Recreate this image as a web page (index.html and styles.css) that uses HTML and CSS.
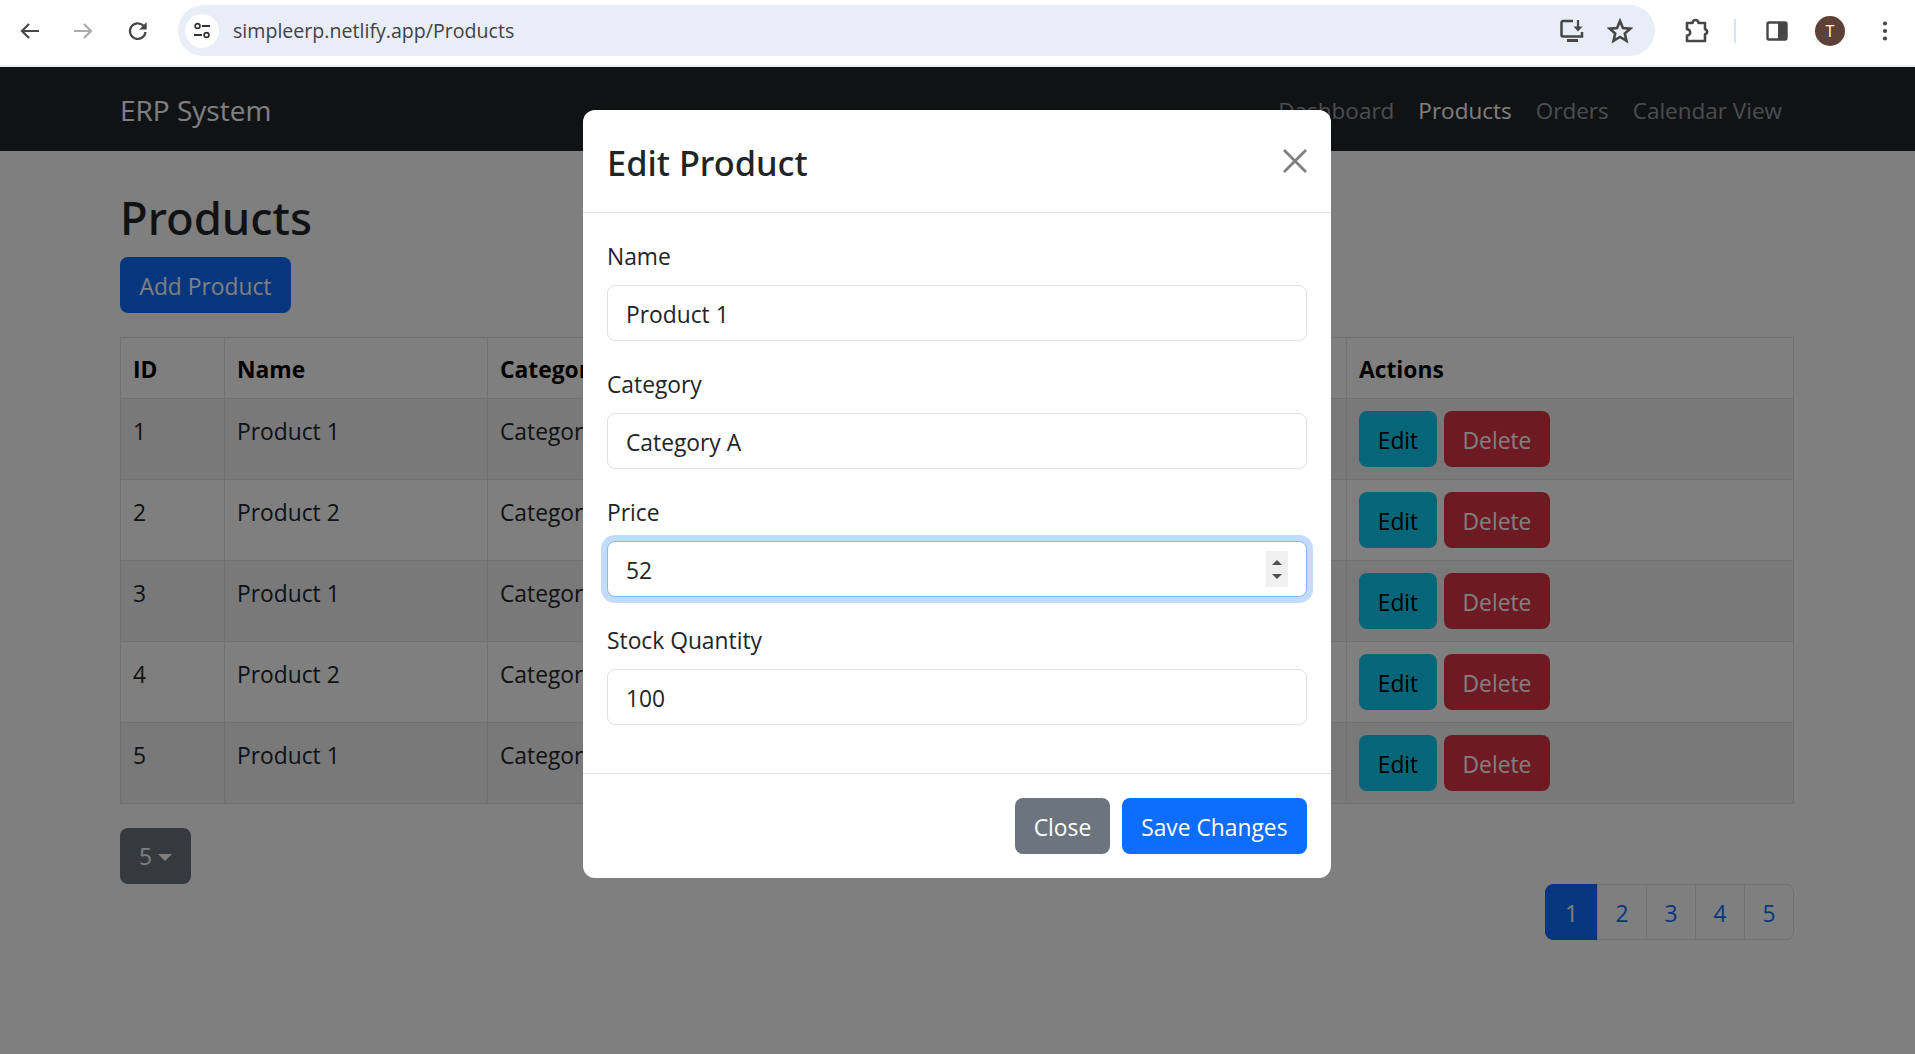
FILE: index.html
```html
<!DOCTYPE html>
<html lang="en">
<head>
    <meta charset="UTF-8">
    <meta name="viewport" content="width=device-width, initial-scale=1.0">
    <title>ERP System</title>
    <link rel="stylesheet" href="styles.css">
</head>
<body>

    <div class="browser-bar">
        <svg class="tool-icon" viewBox="0 0 24 24"><path d="M21 12H4M11 5l-7 7 7 7" fill="none" stroke="#474747" stroke-width="2.2"/></svg>
        <svg class="tool-icon forward" viewBox="0 0 24 24"><path d="M3 12h17M13 5l7 7-7 7" fill="none" stroke="#acacac" stroke-width="2.2"/></svg>
        <svg class="tool-icon reload" viewBox="0 0 24 24"><path d="M19.5 13a7.8 7.8 0 1 1-2.2-6.4L20 9" fill="none" stroke="#474747" stroke-width="2.2"/><path d="M20.6 3v7.4h-7.4z" fill="#474747"/></svg>

        <div class="omnibox">
            <span class="site-icon">
                <svg viewBox="0 0 20 20" width="20" height="20"><circle cx="5.5" cy="5" r="2.4" fill="none" stroke="#333" stroke-width="1.7"/><path d="M10 5h8M2 14h8" stroke="#333" stroke-width="2"/><circle cx="14.5" cy="14" r="2.4" fill="none" stroke="#333" stroke-width="1.7"/></svg>
            </span>
            <span class="url">simpleerp.netlify.app/Products</span>
            <svg class="omni-icon" viewBox="0 0 26 26"><path d="M14 3H4a1.500 1.500 0 0 0-1.500 1.500V17A1.500 1.500 0 0 0 4 18.500h19V14" fill="none" stroke="#474747" stroke-width="2.500"/><path d="M8 22.500h11" stroke="#474747" stroke-width="3"/><path d="M19 2v9" stroke="#474747" stroke-width="2.200"/><path d="M14.500 8.500l4.500 5 4.500-5z" fill="#474747"/></svg>
            <svg class="omni-icon star" viewBox="0 0 24 24"><path d="M12 2.800l2.700 6.400 6.900.6-5.200 4.500 1.600 6.800-6-3.600-6 3.600 1.600-6.800-5.200-4.500 6.900-.6z" fill="none" stroke="#474747" stroke-width="2.400"/></svg>
        </div>

        <svg class="tool-icon puzzle" viewBox="0 0 26 26"><path d="M4 5h5.500a3 3 0 0 1 6 0H22v6.200a2.600 2.600 0 0 1 0 5.100V23H4v-5.400a3.200 3.200 0 0 0 0-6.400z" fill="none" stroke="#474747" stroke-width="2.600" stroke-linejoin="round"/></svg>
        <span class="bar-sep"></span>
        <svg class="tool-icon panel" viewBox="0 0 24 24"><rect x="2.500" y="3.500" width="19" height="17" rx="1.500" fill="none" stroke="#474747" stroke-width="2.400"/><rect x="13" y="3.500" width="8.500" height="17" fill="#474747"/></svg>
        <span class="avatar">T</span>
        <svg class="tool-icon dots" viewBox="0 0 24 24"><circle cx="12" cy="4.500" r="2.100" fill="#474747"/><circle cx="12" cy="12" r="2.100" fill="#474747"/><circle cx="12" cy="19.500" r="2.100" fill="#474747"/></svg>
    </div>

    <div class="app">
        <nav class="navbar">
            <a class="brand">ERP System</a>
            <div class="nav-links">
                <a class="nav-link">Dashboard</a>
                <a class="nav-link active">Products</a>
                <a class="nav-link">Orders</a>
                <a class="nav-link">Calendar View</a>
            </div>
        </nav>

        <main class="content">
            <h2 class="page-title">Products</h2>
            <button class="btn btn-primary">Add Product</button>

            <table class="product-table">
                <thead>
                    <tr>
                        <th class="col-id">ID</th>
                        <th class="col-name">Name</th>
                        <th class="col-category">Category</th>
                        <th class="col-price">Price</th>
                        <th class="col-stock">Stock Quantity</th>
                        <th>Actions</th>
                    </tr>
                </thead>
                <tbody>
                    <tr>
                        <td>1</td><td>Product 1</td><td>Category A</td><td>52</td><td>100</td>
                        <td class="actions"><div class="action-btns"><button class="btn btn-info">Edit</button><button class="btn btn-danger">Delete</button></div></td>
                    </tr>
                    <tr>
                        <td>2</td><td>Product 2</td><td>Category B</td><td>75</td><td>50</td>
                        <td class="actions"><div class="action-btns"><button class="btn btn-info">Edit</button><button class="btn btn-danger">Delete</button></div></td>
                    </tr>
                    <tr>
                        <td>3</td><td>Product 1</td><td>Category A</td><td>52</td><td>100</td>
                        <td class="actions"><div class="action-btns"><button class="btn btn-info">Edit</button><button class="btn btn-danger">Delete</button></div></td>
                    </tr>
                    <tr>
                        <td>4</td><td>Product 2</td><td>Category B</td><td>75</td><td>50</td>
                        <td class="actions"><div class="action-btns"><button class="btn btn-info">Edit</button><button class="btn btn-danger">Delete</button></div></td>
                    </tr>
                    <tr>
                        <td>5</td><td>Product 1</td><td>Category A</td><td>52</td><td>100</td>
                        <td class="actions"><div class="action-btns"><button class="btn btn-info">Edit</button><button class="btn btn-danger">Delete</button></div></td>
                    </tr>
                </tbody>
            </table>

            <button class="btn btn-dark-grey page-size">5<span class="caret"></span></button>

            <div class="pagination">
                <a class="page-item active">1</a>
                <a class="page-item">2</a>
                <a class="page-item">3</a>
                <a class="page-item">4</a>
                <a class="page-item">5</a>
            </div>
        </main>

        <div class="backdrop"></div>

        <div class="modal">
            <div class="modal-header">
                <h5 class="modal-title">Edit Product</h5>
                <svg class="modal-close" viewBox="0 0 24 24"><path d="M1 1l22 22M23 1L1 23" fill="none" stroke="#7f7f7f" stroke-width="2.800"/></svg>
            </div>
            <div class="modal-body">
                <div class="field">
                    <label class="field-label">Name</label>
                    <input class="field-input" value="Product 1">
                </div>
                <div class="field">
                    <label class="field-label">Category</label>
                    <input class="field-input" value="Category A">
                </div>
                <div class="field">
                    <label class="field-label">Price</label>
                    <div class="input-wrap">
                        <input class="field-input focused" value="52">
                        <span class="spinner"><span class="arrow-up"></span><span class="arrow-down"></span></span>
                    </div>
                </div>
                <div class="field">
                    <label class="field-label">Stock Quantity</label>
                    <input class="field-input" value="100">
                </div>
            </div>
            <div class="modal-footer">
                <button class="btn btn-secondary">Close</button>
                <button class="btn btn-primary">Save Changes</button>
            </div>
        </div>
    </div>

</body>
</html>
```

FILE: styles.css
```css
* {
    box-sizing: border-box;
}
html, body {
    height: 100%;
}
body {
    margin: 0;
    overflow: hidden;
    font-family: "Open Sans", "Noto Sans", sans-serif;
    font-size: 22.8px;
    line-height: 36px;
    color: #212529;
    background-color: #fff;
}

/* browser toolbar */
.browser-bar {
    height: 67px;
    padding: 0 0 4px 18px;
    display: flex;
    align-items: center;
    background-color: #fff;
    border-bottom: 2px solid #ececec;
}
.tool-icon {
    width: 24px;
    height: 24px;
    flex: none;
}
.forward {
    margin-left: 29px;
}
.reload {
    margin-left: 31px;
}
.omnibox {
    width: 1477px;
    height: 51px;
    margin-left: 28px;
    padding: 0 0 0 7px;
    display: flex;
    align-items: center;
    flex: none;
    background-color: #e9edf7;
    border-radius: 26px;
}
.site-icon {
    width: 34px;
    height: 34px;
    display: flex;
    align-items: center;
    justify-content: center;
    flex: none;
    background-color: #fff;
    border-radius: 50%;
}
.url {
    margin-left: 14px;
    flex: 1;
    font-size: 19.6px;
    color: #3f4246;
}
.omni-icon {
    width: 26px;
    height: 26px;
    flex: none;
}
.star {
    margin-left: 22px;
    margin-right: 22px;
}
.puzzle {
    width: 26px;
    height: 26px;
    margin-left: 28px;
}
.bar-sep {
    width: 2px;
    height: 24px;
    margin-left: 25px;
    background-color: #d3e3fd;
}
.panel {
    margin-left: 29px;
}
.avatar {
    width: 30px;
    height: 30px;
    margin-left: 26px;
    display: flex;
    align-items: center;
    justify-content: center;
    flex: none;
    font-size: 16px;
    color: #fff;
    background-color: #5d4037;
    border-radius: 50%;
}
.dots {
    margin-left: 28px;
}

/* page */
.app {
    position: relative;
    height: calc(100vh - 67px);
    overflow: hidden;
}
.navbar {
    height: 84px;
    padding: 0 133px 0 120px;
    display: flex;
    align-items: center;
    justify-content: space-between;
    background-color: #212529;
}
.brand {
    font-size: 28px;
    color: #fff;
    padding-top: 1px;
}
.nav-links {
    display: flex;
    gap: 24px;
    padding-top: 3px;
    font-size: 22.5px;
}
.nav-link {
    color: rgba(255, 255, 255, .55);
}
.nav-link.active {
    color: #fff;
}
.content {
    padding: 38px 121px 0 120px;
}
.page-title {
    margin: 0 0 11px;
    font-family: "Noto Sans", sans-serif;
    font-size: 45.4px;
    line-height: 57px;
    font-weight: 500;
}
.btn {
    height: 56px;
    padding: 2px 18.5px 0;
    border: 1px solid transparent;
    border-radius: 8px;
    font-family: inherit;
    font-size: 22.8px;
    color: #fff;
    cursor: pointer;
}
.btn-primary {
    background-color: #0d6efd;
}
.btn-secondary {
    padding: 2px 17.5px 0;
    background-color: #6c757d;
}
.btn-info {
    width: 78px;
    padding: 2px 0 0;
    color: #000;
    background-color: #0dcaf0;
}
.btn-danger {
    width: 106px;
    padding: 2px 0 0;
    background-color: #dc3545;
}
.btn-dark-grey {
    background-color: #6c757d;
}
.page-size {
    display: block;
    width: 71px;
    padding: 0;
}
.caret {
    display: inline-block;
    margin-left: 6px;
    vertical-align: 4px;
    border-top: 7px solid #fff;
    border-left: 7px solid transparent;
    border-right: 7px solid transparent;
}

/* table */
.product-table {
    width: 1674px;
    margin: 24px 0;
    table-layout: fixed;
    border-collapse: collapse;
}
.product-table th, .product-table td {
    padding: 12px;
    text-align: left;
    vertical-align: top;
    border: 1px solid #dee2e6;
}
.product-table th {
    height: 61px;
    font-weight: 700;
    color: #000;
    padding: 14px 12px 10px;
}
.product-table td {
    height: 81px;
    padding-top: 15px;
}
.product-table td.actions {
    padding-top: 12px;
}
.action-btns {
    display: flex;
    gap: 7px;
}
.product-table tbody tr:nth-child(odd) td {
    background-color: #f2f2f2;
}
.col-id {
    width: 104px;
}
.col-name {
    width: 263px;
}
.col-category {
    width: 290px;
}
.col-price {
    width: 200px;
}
.col-stock {
    width: 369px;
}
.pagination {
    display: flex;
    justify-content: flex-end;
}
.page-item {
    width: 50px;
    height: 56px;
    margin-left: -1px;
    padding-top: 3px;
    display: flex;
    align-items: center;
    justify-content: center;
    color: #0d6efd;
    border: 1px solid #dee2e6;
}
.page-item:first-child {
    border-radius: 8px 0 0 8px;
}
.page-item:last-child {
    border-radius: 0 8px 8px 0;
}
.page-item.active {
    width: 53px;
    color: #fff;
    background-color: #0d6efd;
    border-color: #0d6efd;
}

/* modal */
.backdrop {
    position: absolute;
    inset: 0;
    background-color: rgba(0, 0, 0, .5);
}
.modal {
    position: absolute;
    top: 43px;
    left: 583px;
    width: 748px;
    height: 768px;
    display: flex;
    flex-direction: column;
    background-color: #fff;
    border-radius: 12px;
}
.modal-header {
    height: 103px;
    padding: 3px 24px 0 24px;
    display: flex;
    align-items: center;
    justify-content: space-between;
    border-bottom: 1px solid #dee2e6;
}
.modal-title {
    margin: 0;
    font-family: "Noto Sans", sans-serif;
    font-size: 34.4px;
    font-weight: 500;
}
.modal-close {
    width: 24px;
    height: 24px;
    margin-top: -4px;
}
.modal-body {
    flex: 1;
    padding: 25px 24px 0;
}
.field {
    margin-bottom: 25px;
}
.field-label {
    display: block;
    height: 36px;
    margin-bottom: 11px;
    padding-top: 1px;
}
.input-wrap {
    position: relative;
}
.field-input {
    display: block;
    width: 100%;
    height: 56px;
    padding: 2px 18px 0;
    font-family: inherit;
    font-size: 22.8px;
    color: #212529;
    background-color: #fff;
    border: 1px solid #dee2e6;
    border-radius: 8px;
    outline: none;
}
.field-input.focused {
    border-color: #86b7fe;
    box-shadow: 0 0 0 6px #c2dbfe;
}
.spinner {
    position: absolute;
    top: 10px;
    right: 19px;
    width: 22px;
    height: 36px;
    display: flex;
    flex-direction: column;
    align-items: center;
    justify-content: center;
    gap: 9px;
    background-color: #f0f0f0;
}
.arrow-up {
    border-bottom: 5px solid #505050;
    border-left: 5px solid transparent;
    border-right: 5px solid transparent;
}
.arrow-down {
    border-top: 5px solid #505050;
    border-left: 5px solid transparent;
    border-right: 5px solid transparent;
}
.modal-footer {
    height: 105px;
    padding: 24px 24px 0;
    display: flex;
    justify-content: flex-end;
    gap: 12px;
    border-top: 1px solid #dee2e6;
}
```
